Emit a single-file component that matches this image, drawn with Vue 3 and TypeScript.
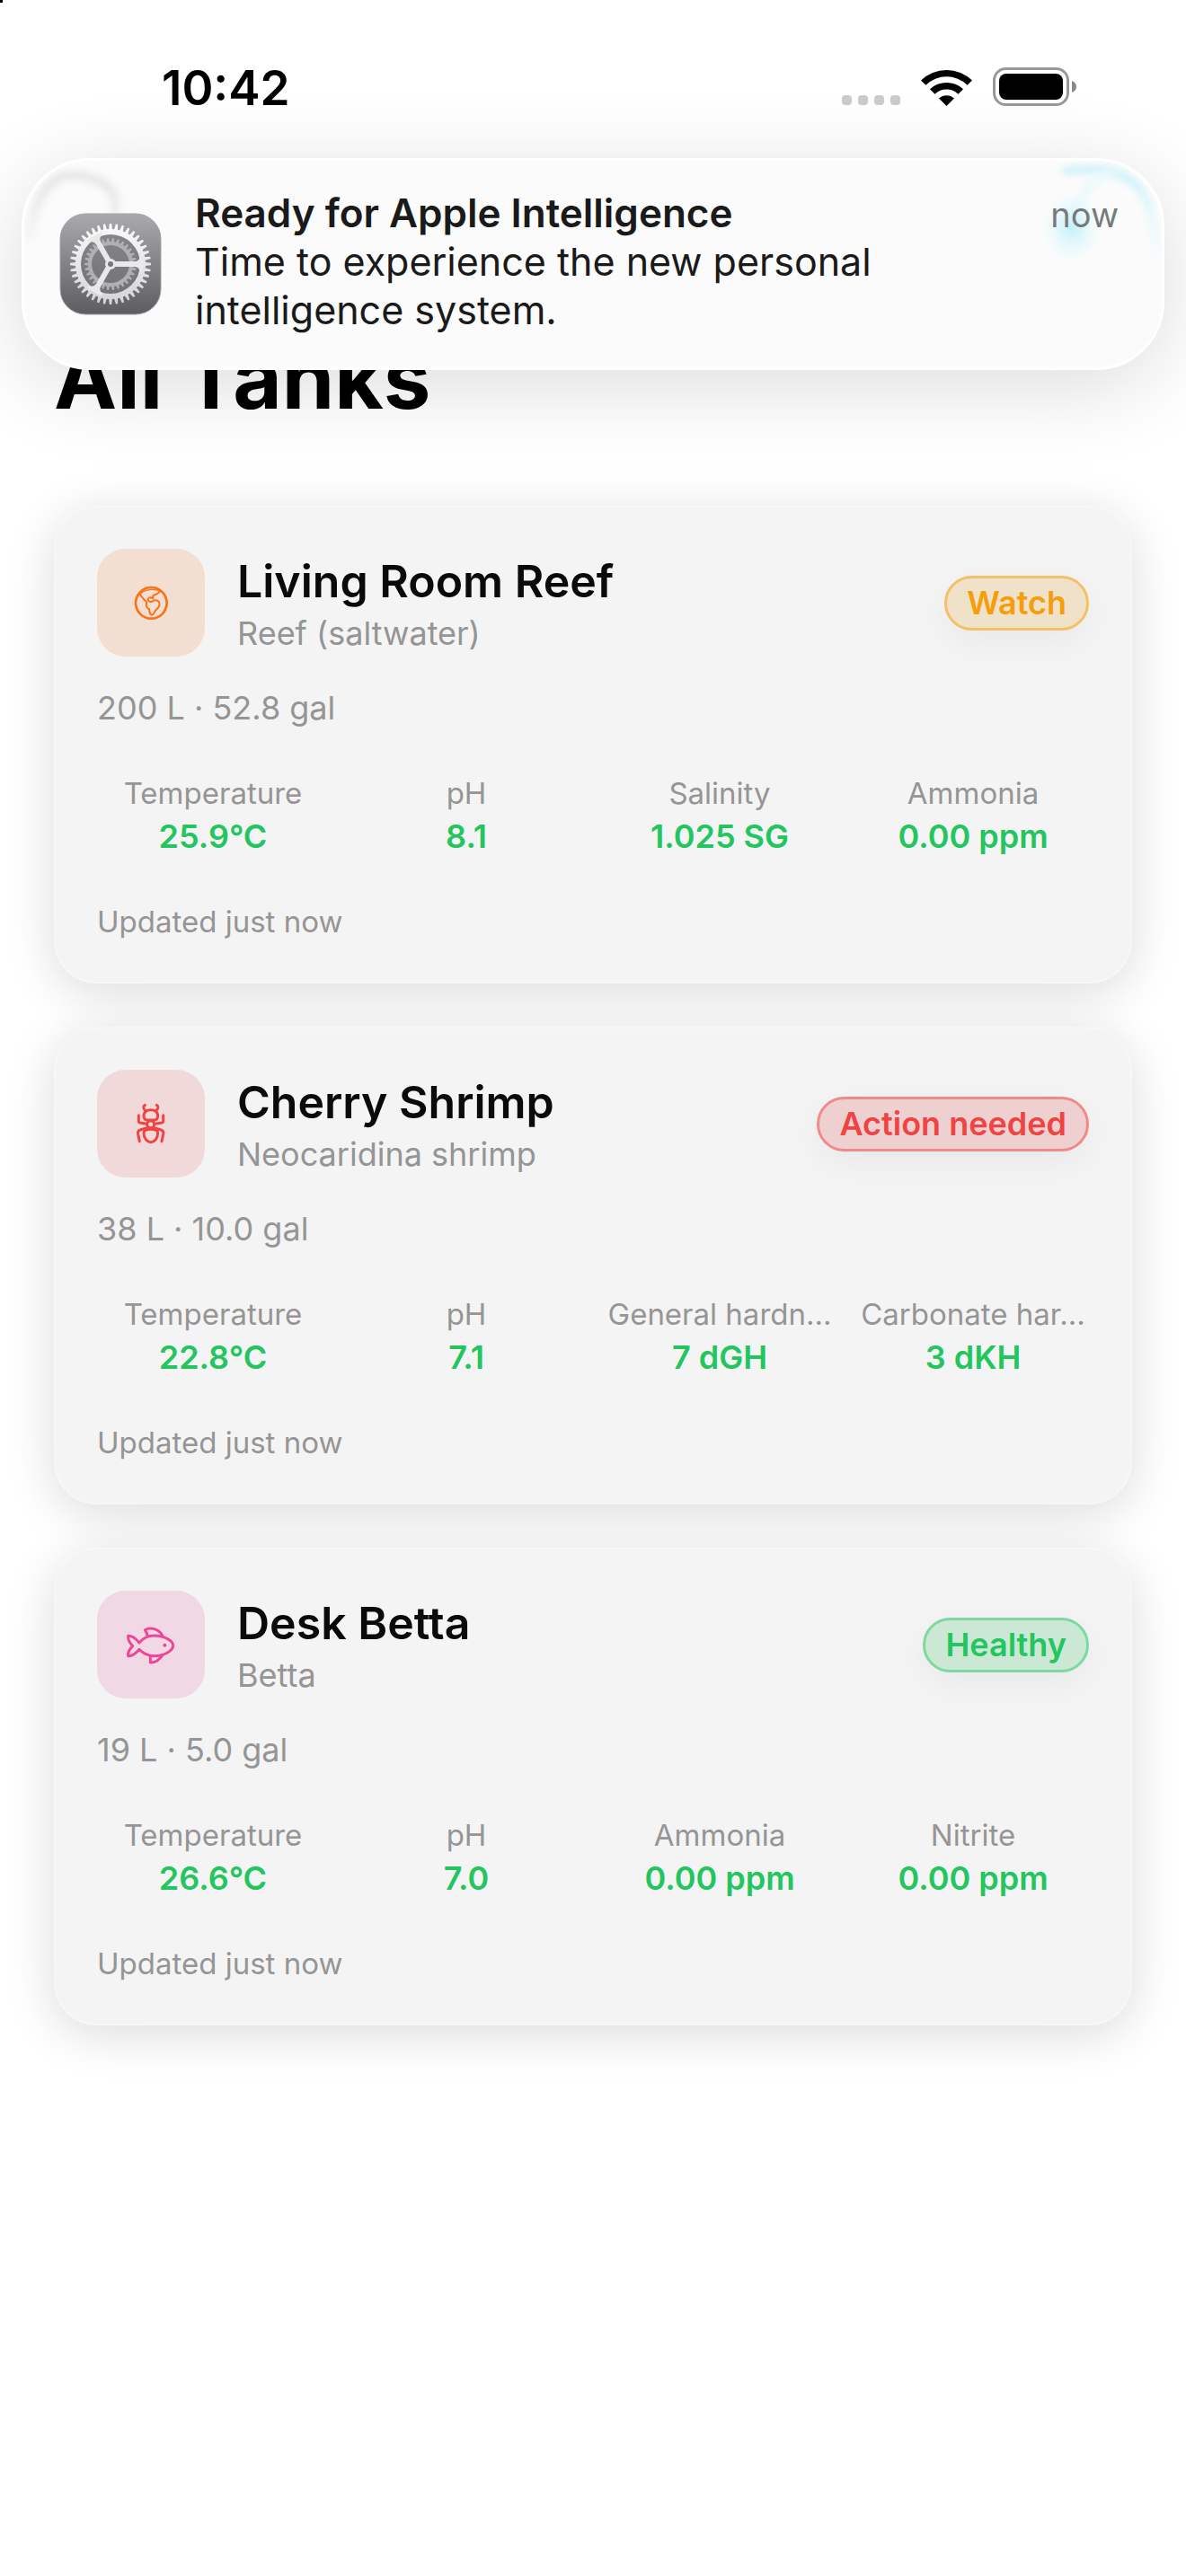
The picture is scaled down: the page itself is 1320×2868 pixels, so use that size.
<script setup lang="ts">
type IconName = 'globe' | 'ant' | 'fish'
type Status = 'watch' | 'action' | 'healthy'

interface Reading {
  label: string
  value: string
}

interface Tank {
  name: string
  kind: string
  icon: IconName
  status: Status
  statusText: string
  volume: string
  readings: Reading[]
  updated: string
}

const tanks: Tank[] = [
  {
    name: 'Living Room Reef',
    kind: 'Reef (saltwater)',
    icon: 'globe',
    status: 'watch',
    statusText: 'Watch',
    volume: '200 L · 52.8 gal',
    readings: [
      { label: 'Temperature', value: '25.9°C' },
      { label: 'pH', value: '8.1' },
      { label: 'Salinity', value: '1.025 SG' },
      { label: 'Ammonia', value: '0.00 ppm' },
    ],
    updated: 'Updated just now',
  },
  {
    name: 'Cherry Shrimp',
    kind: 'Neocaridina shrimp',
    icon: 'ant',
    status: 'action',
    statusText: 'Action needed',
    volume: '38 L · 10.0 gal',
    readings: [
      { label: 'Temperature', value: '22.8°C' },
      { label: 'pH', value: '7.1' },
      { label: 'General hardn…', value: '7 dGH' },
      { label: 'Carbonate har…', value: '3 dKH' },
    ],
    updated: 'Updated just now',
  },
  {
    name: 'Desk Betta',
    kind: 'Betta',
    icon: 'fish',
    status: 'healthy',
    statusText: 'Healthy',
    volume: '19 L · 5.0 gal',
    readings: [
      { label: 'Temperature', value: '26.6°C' },
      { label: 'pH', value: '7.0' },
      { label: 'Ammonia', value: '0.00 ppm' },
      { label: 'Nitrite', value: '0.00 ppm' },
    ],
    updated: 'Updated just now',
  },
]

/** Outline of a toothed wheel centred on the origin. */
function gearOutline(teeth: number, root: number, tip: number): string {
  const step = (Math.PI * 2) / teeth
  const point = (r: number, a: number) => `${(r * Math.cos(a)).toFixed(2)},${(r * Math.sin(a)).toFixed(2)}`
  const parts: string[] = []
  for (let i = 0; i < teeth; i++) {
    const a = i * step
    parts.push(
      point(root, a - step * 0.32),
      point(tip, a - step * 0.16),
      point(tip, a + step * 0.16),
      point(root, a + step * 0.32),
    )
  }
  return `M${parts.join('L')}Z`
}

/** Circle as a path, for cutting a hole with the even-odd rule. */
function hole(r: number): string {
  return `M${r},0A${r},${r} 0 1 0 ${-r},0A${r},${r} 0 1 0 ${r},0Z`
}

const outerGear = gearOutline(40, 39, 45) + hole(33)
const innerGear = gearOutline(30, 25, 29) + hole(21)
</script>

<template>
  <div class="screen">
    <span class="corner"></span>

    <header class="status-bar">
      <time class="clock">10:42</time>
      <div class="indicators">
        <span class="cell"><i></i><i></i><i></i><i></i></span>
        <svg class="wifi" viewBox="0 0 57 42" aria-label="Wi-Fi">
          <path d="M0,13.5A41,41 0 0 1 57,13.5L51.5,18.7A33,33 0 0 0 5.5,18.7Z" />
          <path d="M10,23.3A27,27 0 0 1 47,23.3L41.5,28.7A19,19 0 0 0 15.5,28.7Z" />
          <path d="M20,33.5A12.5,12.5 0 0 1 37,33.5L28.5,42Z" />
        </svg>
        <svg class="battery" viewBox="0 0 94 43" aria-label="Battery full">
          <rect x="1.5" y="1.5" width="82" height="40" rx="13" fill="none" stroke="#999" stroke-width="3" />
          <rect x="7" y="7" width="71" height="29" rx="8" />
          <path d="M88,15Q93,17 93,21.5Q93,26 88,28Z" fill="#888" />
        </svg>
      </div>
    </header>

    <aside class="banner">
      <svg class="glint glint-left" viewBox="0 0 160 120" aria-hidden="true">
        <defs>
          <filter id="soft-grey" x="-30%" y="-30%" width="160%" height="160%"><feGaussianBlur stdDeviation="4" /></filter>
          <linearGradient id="fade-grey" gradientUnits="userSpaceOnUse" x1="0" y1="90" x2="0" y2="30"><stop offset="0" stop-color="#f6f6f6" /><stop offset="1" stop-color="#e4e4e4" /></linearGradient>
        </defs>
        <path d="M6,90C10,40 28,16 54,16C90,18 110,36 98,64" fill="none" stroke="url(#fade-grey)" stroke-width="9" filter="url(#soft-grey)" />
      </svg>
      <svg class="glint glint-right" viewBox="0 0 180 140" aria-hidden="true">
        <defs>
          <filter id="soft-cyan" x="-40%" y="-40%" width="180%" height="180%"><feGaussianBlur stdDeviation="4" /></filter>
          <linearGradient id="fade-cyan" gradientUnits="userSpaceOnUse" x1="0" y1="15" x2="0" y2="115"><stop offset="0" stop-color="#bff0fa" /><stop offset="0.5" stop-color="#e2f8fc" /><stop offset="1" stop-color="#f6fcfd" /></linearGradient>
          <radialGradient id="pool"><stop offset="0" stop-color="#c2f1fa" /><stop offset="0.4" stop-color="#d8f6fb" stop-opacity=".8" /><stop offset="1" stop-color="#eafafd" stop-opacity="0" /></radialGradient>
        </defs>
        <path d="M70,12C110,6 138,10 156,32C168,48 174,80 174,115" fill="none" stroke="url(#fade-cyan)" stroke-width="7" filter="url(#soft-cyan)" />
        <path d="M132,12C104,14 90,34 82,66" fill="none" stroke="#e9f9fc" stroke-width="9" filter="url(#soft-cyan)" />
        <ellipse cx="80" cy="74" rx="34" ry="40" fill="url(#pool)" />
      </svg>
      <svg class="app-icon" viewBox="0 0 114 114" aria-label="Settings">
        <defs>
          <linearGradient id="plate" x1="0" y1="0" x2="0" y2="1"><stop offset="0" stop-color="#aaa9ae" /><stop offset="1" stop-color="#5d5c61" /></linearGradient>
          <linearGradient id="steel" x1="0" y1="0" x2="0" y2="1"><stop offset="0" stop-color="#fafafa" /><stop offset="1" stop-color="#d4d4d6" /></linearGradient>
        </defs>
        <rect x="1" y="1" width="112" height="112" rx="28" fill="url(#plate)" stroke="#a3a2a7" />
        <g transform="translate(57 57)">
          <circle r="34" fill="#77767b" opacity=".6" />
          <path :d="innerGear" fill="#b0afb3" fill-rule="evenodd" />
          <path :d="outerGear" fill="url(#steel)" fill-rule="evenodd" />
          <g fill="#e9e9ea">
            <path v-for="angle in [0, 120, 240]" :key="angle" :transform="`rotate(${angle})`" d="M3,-3H27Q32,-3 33,-9L36,-9V9L33,9Q32,3 27,3H3Z" />
            <circle r="6" />
          </g>
          <circle r="3" fill="#77767b" />
        </g>
      </svg>
      <div class="banner-body">
        <strong>Ready for Apple Intelligence</strong>
        <p>Time to experience the new personal intelligence system.</p>
      </div>
      <span class="when">now</span>
    </aside>

    <main>
      <h1>All Tanks</h1>

      <article v-for="tank in tanks" :key="tank.name" class="card">
        <div class="head">
          <span class="tile" :class="tank.icon">
            <svg viewBox="24 36 360 360" aria-hidden="true">
              <g v-if="tank.icon === 'globe'" stroke-width="6">
                <circle cx="205" cy="217" r="52" stroke-width="8" />
                <path d="M166,184C172,198 184,208 190,215C186,225 189,233 198,238C200,246 198,256 208,257C216,254 215,244 222,239C230,232 235,222 231,214C226,207 215,206 210,211C202,216 193,210 194,204C198,197 206,198 210,202C215,199 207,194 213,191C221,189 229,186 236,177" />
                <path d="M172,184C188,170 220,169 234,178" stroke-width="4" />
              </g>
              <g v-else-if="tank.icon === 'ant'" stroke-width="9">
                <path d="M184,154C177,158 178,166 187,174M223,154C230,158 229,166 220,174" />
                <path d="M180,191C180,176 192,170 203.500,170C215,170 227,176 227,191C227,201 220,204 212,204H195C187,204 180,201 180,191Z" />
                <circle cx="203" cy="218" r="12" />
                <path d="M163,188V207C163,214 168,213 172,214L190,217M245,188V207C245,214 240,213 236,214L216,217" />
                <path d="M192,230L168,237C160,239 160,246 161,252L166,275M214,230L238,237C246,239 246,246 245,252L240,275" />
                <path d="M180,247C180,237 190,235 203.500,235C217,235 227,237 227,247C227,264 216,278 203.500,278C191,278 180,264 180,247Z" />
              </g>
              <g v-else stroke-width="9">
                <path d="M165,210C180,192 196,186 214,186C246,186 278,202 278,219C278,238 246,254 214,254C196,254 180,248 165,232C155,244 144,256 128,254C126,242 134,230 143,221C134,212 126,200 128,187C142,186 155,198 165,210Z" />
                <path d="M192,186C191,178 187,172 184,167C204,155 234,166 243,188M202,255V276C216,277 232,267 243,251" />
                <circle cx="250" cy="218" r="6" class="eye" />
              </g>
            </svg>
          </span>
          <div class="title">
            <h2>{{ tank.name }}</h2>
            <p>{{ tank.kind }}</p>
          </div>
          <span class="badge" :class="tank.status">{{ tank.statusText }}</span>
        </div>

        <p class="volume">{{ tank.volume }}</p>

        <dl class="readings">
          <div v-for="reading in tank.readings" :key="reading.label" class="reading">
            <dt>{{ reading.label }}</dt>
            <dd>{{ reading.value }}</dd>
          </div>
        </dl>

        <p class="updated">{{ tank.updated }}</p>
      </article>
    </main>
  </div>
</template>

<style>
body {
  margin: 0;
  background: #fff;
}
</style>

<style scoped>
.screen {
  position: relative;
  min-height: 100vh;
  background: #fff;
  color: #0a0a0a;
  font-family: Inter, "Liberation Sans", sans-serif;
}

h1,
h2,
p,
dl,
dd {
  margin: 0;
}

.corner {
  position: absolute;
  top: 0;
  left: 0;
  width: 3px;
  height: 3px;
  background: #000;
}

.status-bar {
  display: flex;
  align-items: center;
  justify-content: space-between;
  height: 196px;
  padding: 0 121px 0 180px;
  box-sizing: border-box;
}

.clock {
  color: #000;
  font-size: 53px;
  font-weight: 600;
  line-height: 64px;
}

.indicators {
  display: flex;
  align-items: flex-end;
  gap: 23px;
  padding-bottom: 3px;
}

.cell {
  display: flex;
  gap: 7px;
  padding-bottom: 1px;
}

.cell i {
  width: 11px;
  height: 11px;
  border-radius: 4px;
  background: #cbcbcb;
}

.wifi {
  width: 57px;
  height: 42px;
}

.battery {
  width: 94px;
  height: 43px;
}

.banner {
  position: absolute;
  top: 176px;
  left: 24px;
  right: 24px;
  display: flex;
  align-items: center;
  gap: 37px;
  box-sizing: border-box;
  min-height: 236px;
  padding: 31px 48px 31px 39px;
  border: 3px solid #fff;
  border-radius: 76px;
  background: #fbfbfb;
  box-shadow: 0 18px 96px rgba(0, 0, 0, 0.14);
  overflow: hidden;
}

.glint {
  position: absolute;
  top: 0;
}

.glint-left {
  left: 0;
  width: 160px;
  height: 120px;
}

.glint-right {
  right: 0;
  width: 180px;
  height: 140px;
}

.app-icon {
  position: relative;
  flex: none;
  width: 114px;
  height: 114px;
}

.banner-body {
  position: relative;
  flex: 1;
  max-width: 800px;
  padding-bottom: 6px;
  color: #1a1a1a;
  font-size: 43px;
  line-height: 54px;
}

.banner-body strong {
  display: block;
  font-size: 44px;
  font-weight: 600;
}

.when {
  position: relative;
  align-self: flex-start;
  margin-left: auto;
  color: #777a7a;
  font-size: 38px;
  line-height: 58px;
}

main {
  display: flex;
  flex-direction: column;
  gap: 48px;
  padding: 163px 60px 72px;
}

h1 {
  margin-bottom: 32px;
  color: #000;
  font-size: 94px;
  font-weight: 700;
  line-height: 124px;
}

.card {
  padding: 48px;
  border-radius: 48px;
  background: #f4f4f4;
  box-shadow: inset 0 0 0 2px #f7f7f7, 0 10px 54px rgba(0, 0, 0, 0.14);
}

.head {
  display: flex;
  align-items: center;
}

.tile {
  flex: none;
  width: 120px;
  height: 120px;
  border-radius: 32px;
}

.tile svg {
  display: block;
  width: 120px;
  height: 120px;
  fill: none;
  stroke: currentColor;
  stroke-linecap: round;
  stroke-linejoin: round;
}

.tile .eye {
  fill: currentColor;
  stroke: none;
}

.globe {
  background: #f3dfd2;
  color: #fb7214;
}

.ant {
  background: #f1d8d9;
  color: #f04343;
}

.fish {
  background: #f0d8e4;
  color: #ee4599;
}

.title {
  flex: 1;
  min-width: 0;
  padding-left: 36px;
}

h2 {
  font-size: 50px;
  font-weight: 600;
  line-height: 68px;
}

.title p,
.volume {
  color: #959595;
  font-size: 36px;
  line-height: 48px;
}

.badge {
  flex: none;
  padding: 6px 22px;
  border: 3px solid;
  border-radius: 31px;
  font-size: 36px;
  font-weight: 600;
  line-height: 43px;
  box-shadow: 0 12px 40px rgba(0, 0, 0, 0.05);
}

.watch {
  border-color: #f5bf66;
  background: #f0e1c9;
  color: #f59e0b;
}

.action {
  border-color: #f08a8a;
  background: #eed0d1;
  color: #ef4444;
}

.healthy {
  border-color: #7dd9a0;
  background: #cbe8d5;
  color: #22c55e;
}

.volume {
  margin-top: 33px;
}

.readings {
  display: grid;
  grid-template-columns: repeat(4, minmax(0, 1fr));
  gap: 24px;
  margin-top: 32px;
}

.reading {
  padding: 18px 0 11px;
  text-align: center;
  white-space: nowrap;
}

dt,
.updated {
  color: #959595;
  font-size: 33px;
  line-height: 42px;
}

dd {
  color: #22c55e;
  font-size: 36px;
  font-weight: 600;
  line-height: 54px;
}

.updated {
  margin-top: 36px;
}
</style>
